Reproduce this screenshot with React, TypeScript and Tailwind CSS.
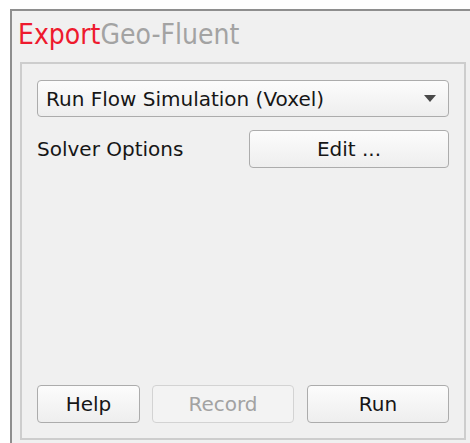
import React from "react";

const bodyFont = { fontFamily: '"DejaVu Sans", "Liberation Sans", sans-serif' };
const titleFont = { fontFamily: '"DejaVu Sans Condensed", "DejaVu Sans", sans-serif' };

function Btn({ children, disabled, className }: { children: React.ReactNode; disabled?: boolean; className?: string }) {
  return (
    <div
      className={
        "flex h-[38px] items-center justify-center rounded-[4px] border text-[20px] " +
        (disabled
          ? "border-[#d3d3d3] bg-[#f3f3f3] text-[#a2a2a2] "
          : "border-[#acacac] bg-gradient-to-b from-[#fcfcfc] to-[#eeeeee] text-[#161616] ") +
        (className ?? "")
      }
    >
      {children}
    </div>
  );
}

export default function App() {
  return (
    <div className="h-[443px] w-[470px] overflow-hidden bg-white" style={bodyFont}>
      <div className="ml-[10px] mt-[9px] h-[460px] w-[500px] border-l-2 border-t-2 border-[#8e8e8e] bg-[#f0f0f0]">
        <div className="flex h-[51px] items-center pb-[3px] pl-[6px] text-[28px] leading-none" style={titleFont}>
          <span className="text-[#ee1a2e]">Export</span>
          <span className="text-[#a3a3a3]">Geo-Fluent</span>
        </div>
        <div className="ml-[8px] flex h-[378px] w-[446px] flex-col border-2 border-[#cdcdcd] px-[15px] pb-[15px] pt-[16px]">
          <div className="flex h-[37px] items-center justify-between rounded-[4px] border border-[#acacac] bg-gradient-to-b from-[#fcfcfc] to-[#eeeeee] pl-[8px] pr-[12px] text-[20px] text-[#161616]">
            <span>Run Flow Simulation (Voxel)</span>
            <svg width="12" height="7" viewBox="0 0 12 7">
              <path d="M0 0 L12 0 L6 7 Z" fill="#4a4a4a" />
            </svg>
          </div>
          <div className="mt-[13px] flex items-center justify-between">
            <span className="text-[20px] text-[#161616]">Solver Options</span>
            <Btn className="w-[200px]">Edit ...</Btn>
          </div>
          <div className="flex-1" />
          <div className="flex items-center">
            <Btn className="w-[103px]">Help</Btn>
            <Btn disabled className="ml-[12px] w-[142px]">Record</Btn>
            <Btn className="ml-[13px] w-[142px]">Run</Btn>
          </div>
        </div>
      </div>
    </div>
  );
}
